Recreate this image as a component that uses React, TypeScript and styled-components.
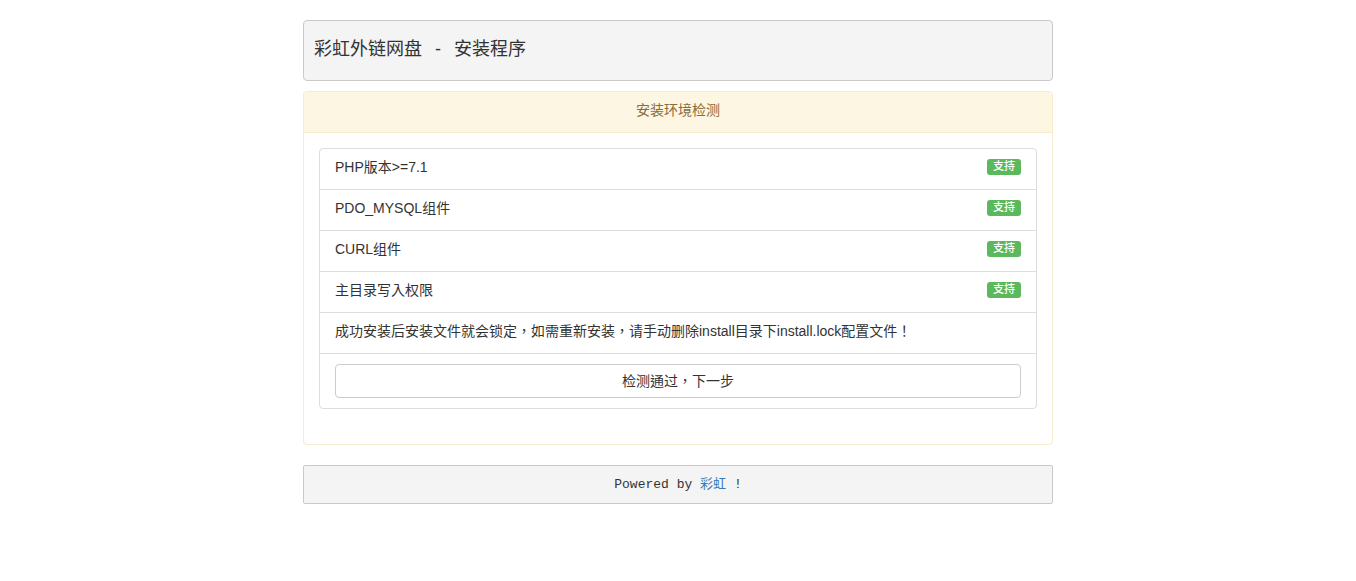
import { createGlobalStyle, styled } from 'styled-components'

const GlobalStyle = createGlobalStyle`
  html, body {
    margin: 0;
    padding: 0;
    background: #fff;
  }
  body {
    font-family: "Liberation Sans", Arial, "Noto Sans CJK TC", "Noto Sans CJK SC", sans-serif;
    font-size: 14px;
    line-height: 1.42857;
    color: #333;
  }
  * {
    box-sizing: border-box;
  }
`

const Container = styled.div`
  width: 750px;
  margin: 0 auto;
  padding-top: 20px;
`

const Header = styled.div`
  height: 61px;
  display: flex;
  align-items: center;
  padding: 0 10px 2px;
  background: #f4f4f4;
  border: 1px solid #c9c9c9;
  border-radius: 4px;
  margin-bottom: 10px;

  h3 {
    margin: 0;
    font-size: 18px;
    font-weight: 400;
    color: #333;
  }
`

const Sep = styled.span`
  padding: 0 13px;
`

const Panel = styled.div`
  border: 1px solid #faebcc;
  border-radius: 4px;
  background: #fff;
  margin-bottom: 20px;
`

const PanelHeading = styled.div`
  background: #fcf6e3;
  color: #8a6d3b;
  border-bottom: 1px solid #faebcc;
  border-radius: 3px 3px 0 0;
  padding: 9px 15px 11px;
  text-align: center;
  font-size: 14px;
`

const PanelBody = styled.div`
  padding: 15px;
`

const ListGroup = styled.ul`
  list-style: none;
  margin: 0 0 20px;
  padding: 0;
`

const ListItem = styled.li`
  display: flex;
  align-items: center;
  justify-content: space-between;
  padding: 9px 15px 11px;
  border: 1px solid #ddd;
  margin-bottom: -1px;
  background: #fff;

  &:first-child {
    border-radius: 4px 4px 0 0;
  }
  &:last-child {
    border-radius: 0 0 4px 4px;
    margin-bottom: 0;
    padding: 10px 15px;
  }
`

const Label = styled.span`
  display: inline-block;
  background: #5cb85c;
  color: #fff;
  font-size: 11px;
  font-weight: 500;
  line-height: 1;
  padding: 2px 6px 3px;
  border-radius: 3px;
  align-self: flex-start;
  margin-top: 1px;
`

const Button = styled.button`
  display: block;
  width: 100%;
  height: 34px;
  padding: 5px 12px 7px;
  font-family: inherit;
  font-size: 14px;
  color: #333;
  background: #fff;
  border: 1px solid #ccc;
  border-radius: 4px;
  cursor: pointer;
`

const Footer = styled.div`
  height: 39px;
  display: flex;
  align-items: center;
  justify-content: center;
  padding-top: 1px;
  background: #f4f4f4;
  border: 1px solid #c9c9c9;
  border-radius: 2px;
  font-family: "Liberation Mono", "Courier New", "Noto Sans CJK TC", monospace;
  font-size: 13px;
  color: #333;
  white-space: pre;

  a {
    color: #337ab7;
    text-decoration: none;
  }
`

const checks = ['PHP版本>=7.1', 'PDO_MYSQL组件', 'CURL组件', '主目录写入权限']

export default function App() {
  return (
    <>
      <GlobalStyle />
      <Container>
        <Header>
          <h3>
            彩虹外链网盘<Sep>-</Sep>安装程序
          </h3>
        </Header>
        <Panel>
          <PanelHeading>安装环境检测</PanelHeading>
          <PanelBody>
            <ListGroup>
              {checks.map((c) => (
                <ListItem key={c}>
                  <span>{c}</span>
                  <Label>支持</Label>
                </ListItem>
              ))}
              <ListItem>
                <span>成功安装后安装文件就会锁定，如需重新安装，请手动删除install目录下install.lock配置文件！</span>
              </ListItem>
              <ListItem>
                <Button>检测通过，下一步</Button>
              </ListItem>
            </ListGroup>
          </PanelBody>
        </Panel>
        <Footer>
          Powered by <a href="#">彩虹</a> !
        </Footer>
      </Container>
    </>
  )
}
